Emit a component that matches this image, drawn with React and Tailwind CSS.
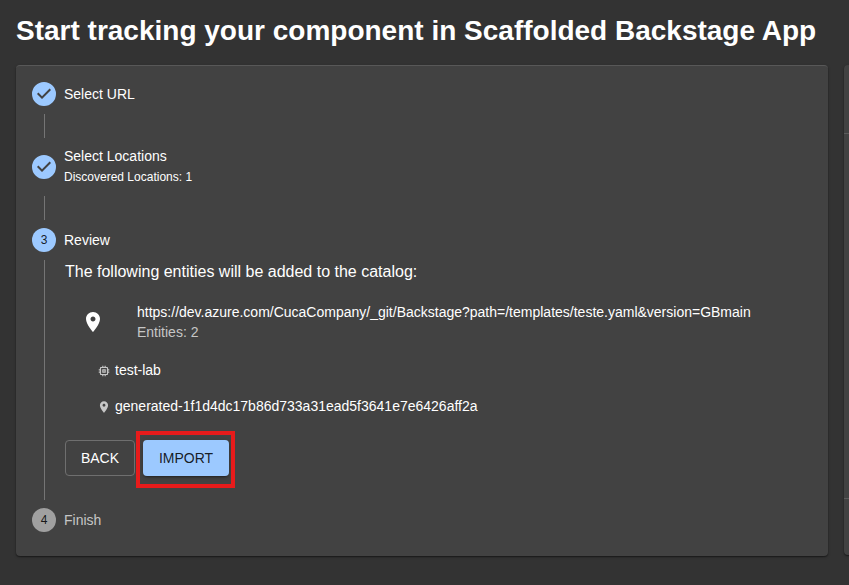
import React from "react";

const PIN =
  "M12 2C8.13 2 5 5.13 5 9c0 5.25 7 13 7 13s7-7.75 7-13c0-3.87-3.13-7-7-7zm0 9.5c-1.38 0-2.5-1.12-2.5-2.5s1.12-2.5 2.5-2.5 2.5 1.12 2.5 2.5-1.12 2.5-2.5 2.5z";
const CHIP =
  "M15 9H9v6h6V9zm-2 4h-2v-2h2v2zm8-2V9h-2V7c0-1.1-.9-2-2-2h-2V3h-2v2h-2V3H9v2H7c-1.1 0-2 .9-2 2v2H3v2h2v2H3v2h2v2c0 1.1.9 2 2 2h2v2h2v-2h2v2h2v-2h2c1.1 0 2-.9 2-2v-2h2v-2h-2v-2h2zm-4 6H7V7h10v10z";
const CHECK =
  "M12 0a12 12 0 1 0 0 24 12 12 0 0 0 0-24zm-2 17l-5-5 1.4-1.4 3.6 3.6 7.6-7.6L19 8l-9 9z";

function Icon({ d, className }) {
  return (
    <svg viewBox="0 0 24 24" fill="currentColor" className={className}>
      <path d={d} />
    </svg>
  );
}

function Done() {
  return <Icon d={CHECK} className="size-6 shrink-0 text-[#9cc9ff]" />;
}

function StepNumber({ n, className }) {
  return (
    <span className={`flex size-6 shrink-0 items-center justify-center rounded-full text-xs leading-6 text-black/87 ${className}`}>
      {n}
    </span>
  );
}

function Connector() {
  return <div className="my-2 ml-3 h-6 w-px bg-[#757575]" />;
}

function Entity({ d, name }) {
  return (
    <li className="flex h-9 items-center pl-8">
      <Icon d={d} className="mr-1 mt-0.5 size-3.5 text-[#c6c6c6]" />
      <span>{name}</span>
    </li>
  );
}

export default function App() {
  return (
    <div className="h-[585px] w-[849px] overflow-hidden bg-[#333333] font-['Liberation_Sans',Arial,sans-serif] text-sm leading-5 text-white">
      <header className="flex h-[65px] items-center px-4 pb-[3px]">
        <h1 className="whitespace-nowrap text-[28px] font-bold leading-8">
          Start tracking your component in Scaffolded Backstage App
        </h1>
      </header>
      <main className="flex gap-4 pl-4">
        <section className="h-[491px] w-[812px] shrink-0 rounded border-t border-[#585858] bg-[#424242] px-4 pt-4 shadow-[0_1px_3px_rgba(0,0,0,0.3),0_1px_1px_rgba(0,0,0,0.3)]">
          <div className="flex h-6 items-center gap-2">
            <Done />
            <span>Select URL</span>
          </div>
          <Connector />
          <div className="flex h-[42px] items-center gap-2">
            <Done />
            <div>
              <div>Select Locations</div>
              <div className="py-px text-xs leading-5">Discovered Locations: 1</div>
            </div>
          </div>
          <Connector />
          <div className="flex h-6 items-center gap-2">
            <StepNumber n="3" className="bg-[#9cc9ff]" />
            <span>Review</span>
          </div>
          <div className="my-2 ml-3 h-60 border-l border-[#757575] pl-5">
            <p className="text-base leading-6">The following entities will be added to the catalog:</p>
            <div className="mt-[18px] flex h-10 items-center pl-4">
              <Icon d={PIN} className="size-6" />
              <div className="ml-8">
                <div>https://dev.azure.com/CucaCompany/_git/Backstage?path=/templates/teste.yaml&amp;version=GBmain</div>
                <div className="text-[#c6c6c6]">Entities: 2</div>
              </div>
            </div>
            <ul className="mt-2.5">
              <Entity d={CHIP} name="test-lab" />
              <Entity d={PIN} name="generated-1f1d4dc17b86d733a31ead5f3641e7e6426aff2a" />
            </ul>
            <div className="mt-4 flex gap-2">
              <button className="h-9 w-[70px] rounded border border-[#6f6f6f]">BACK</button>
              <div className="relative">
                <button className="h-9 w-[86px] rounded bg-[#9cc9ff] text-black/87 shadow-[0_3px_1px_-2px_rgba(0,0,0,0.2),0_2px_2px_rgba(0,0,0,0.14),0_1px_5px_rgba(0,0,0,0.12)]">
                  IMPORT
                </button>
                <div className="pointer-events-none absolute -left-[7px] -top-[9px] h-[57px] w-[99px] border-4 border-[#e71b1b]" />
              </div>
            </div>
          </div>
          <div className="flex h-6 items-center gap-2">
            <StepNumber n="4" className="bg-[#a0a0a0]" />
            <span className="text-[#c6c6c6]">Finish</span>
          </div>
        </section>
        <aside className="h-[490px] w-64 shrink-0 rounded bg-[#424242] shadow-[0_1px_3px_rgba(0,0,0,0.3),0_1px_1px_rgba(0,0,0,0.3)]">
          <div className="h-[69px] border-b border-[#5b5b5b]" />
          <div className="h-[365px] border-b border-[#5b5b5b]" />
        </aside>
      </main>
    </div>
  );
}
